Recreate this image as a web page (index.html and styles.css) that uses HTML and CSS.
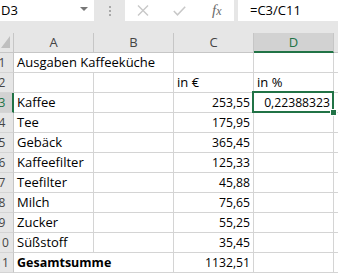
FILE: index.html
```html
<!DOCTYPE html>
<html lang="de">
<head>
  <meta charset="UTF-8">
  <title>Ausgaben Kaffeeküche</title>
  <link rel="stylesheet" href="styles.css">
</head>
<body>

<div class="toolbar">
  <div class="namebox">
    <span>D3</span>
    <span class="caret"></span>
  </div>
  <div class="grip"><i></i><i></i><i></i></div>
  <div class="fxbox">
    <svg class="ico-x" width="12" height="11" viewBox="0 0 12 11"><path d="M1 0.5L11 10.5M11 0.5L1 10.5" stroke="#c8c8c8" stroke-width="1.4" fill="none"/></svg>
    <svg class="ico-ok" width="13" height="10" viewBox="0 0 13 10"><path d="M0.8 5L4.5 8.8L12.2 0.8" stroke="#c8c8c8" stroke-width="1.5" fill="none"/></svg>
    <span class="fx"><i>f</i><i class="x">x</i></span>
  </div>
  <div class="formula">=C3/C11</div>
</div>

<div class="sheet">
  <div class="corner"><svg width="13" height="19" viewBox="0 0 13 19"><path d="M10 3L10 15L1 15Z" fill="#bfbfbf"/></svg></div>
  <div class="colhead">A</div>
  <div class="colhead">B</div>
  <div class="colhead">C</div>
  <div class="colhead active">D</div>
  <div class="colhead"></div>

  <div class="rowhead"><span>1</span></div>
  <div class="cell wide">Ausgaben Kaffeeküche</div>
  <div class="cell"></div>
  <div class="cell"></div>
  <div class="cell"></div>

  <div class="rowhead"><span>2</span></div>
  <div class="cell"></div>
  <div class="cell"></div>
  <div class="cell">in €</div>
  <div class="cell">in %</div>
  <div class="cell"></div>

  <div class="rowhead active"><span>3</span></div>
  <div class="cell">Kaffee</div>
  <div class="cell"></div>
  <div class="cell num">253,55</div>
  <div class="cell num selected">0,22388323</div>
  <div class="cell"></div>

  <div class="rowhead"><span>4</span></div>
  <div class="cell">Tee</div>
  <div class="cell"></div>
  <div class="cell num">175,95</div>
  <div class="cell"></div>
  <div class="cell"></div>

  <div class="rowhead"><span>5</span></div>
  <div class="cell">Gebäck</div>
  <div class="cell"></div>
  <div class="cell num">365,45</div>
  <div class="cell"></div>
  <div class="cell"></div>

  <div class="rowhead"><span>6</span></div>
  <div class="cell">Kaffeefilter</div>
  <div class="cell"></div>
  <div class="cell num">125,33</div>
  <div class="cell"></div>
  <div class="cell"></div>

  <div class="rowhead"><span>7</span></div>
  <div class="cell">Teefilter</div>
  <div class="cell"></div>
  <div class="cell num">45,88</div>
  <div class="cell"></div>
  <div class="cell"></div>

  <div class="rowhead"><span>8</span></div>
  <div class="cell">Milch</div>
  <div class="cell"></div>
  <div class="cell num">75,65</div>
  <div class="cell"></div>
  <div class="cell"></div>

  <div class="rowhead"><span>9</span></div>
  <div class="cell">Zucker</div>
  <div class="cell"></div>
  <div class="cell num">55,25</div>
  <div class="cell"></div>
  <div class="cell"></div>

  <div class="rowhead"><span>10</span></div>
  <div class="cell">Süßstoff</div>
  <div class="cell"></div>
  <div class="cell num">35,45</div>
  <div class="cell"></div>
  <div class="cell"></div>

  <div class="rowhead"><span>11</span></div>
  <div class="cell wide bold">Gesamtsumme</div>
  <div class="cell num">1132,51</div>
  <div class="cell"></div>
  <div class="cell"></div>
</div>

</body>
</html>
```

FILE: styles.css
```css
body { margin: 0; background: #e6e6e6; font-family: "Open Sans", "Liberation Sans", sans-serif; color: #000; overflow: hidden; }

/* formula bar */
.toolbar { display: flex; height: 21px; }
.namebox { width: 94px; background: #fff; display: flex; align-items: center; justify-content: space-between; padding: 0 6px 1px 1px; box-sizing: border-box; font-size: 13px; }
.caret { width: 0; height: 0; border-left: 4px solid transparent; border-right: 4px solid transparent; border-top: 4px solid #777; margin-bottom: 2px; }
.grip { width: 31px; display: flex; flex-direction: column; align-items: center; justify-content: center; gap: 2px; }
.grip i { width: 2px; height: 2px; background: #a8a8a8; }
.fxbox { width: 109px; background: #fff; display: flex; align-items: center; padding-left: 12px; box-sizing: border-box; }
.ico-x { margin-right: 24px; }
.ico-ok { margin-right: 26px; }
.fx { font-family: "Liberation Serif", serif; color: #6a6a6a; font-size: 15px; line-height: 1; }
.fx .x { font-size: 12px; }
.formula { flex: 1; margin-left: 4px; background: #fff; padding: 0 0 1px 12px; font-size: 13px; line-height: 20px; }

/* sheet grid */
.sheet { display: grid; grid-template-columns: 14px 80px 80px 80px 80px 1fr; grid-auto-rows: 20px; margin-top: 12px; background: #fff; font-size: 13px; }
.corner, .colhead, .rowhead { background: #e6e6e6; box-sizing: border-box; border-right: 1px solid #c6c6c6; border-bottom: 1px solid #c6c6c6; color: #444; }
.corner { line-height: 0; }
.colhead { text-align: center; line-height: 19px; font-size: 13px; }
.colhead.active { background: #d2d2d2; color: #217346; border-bottom: 2px solid #217346; line-height: 18px; }
.rowhead { overflow: hidden; border-bottom-color: #d4d4d4; font-size: 12px; line-height: 19px; }
.rowhead span { display: block; width: 30px; margin-left: -13px; text-align: center; }
.rowhead.active { background: #d2d2d2; color: #217346; border-right: 2px solid #217346; }

.cell { box-sizing: border-box; border-right: 1px solid #d4d4d4; border-bottom: 1px solid #d4d4d4; padding: 0 3px; white-space: nowrap; line-height: 19px; }
.cell.wide { grid-column: span 2; }
.cell.bold { font-weight: 700; font-size: 12.5px; }
.num { text-align: right; font-size: 12.2px; }
.selected { position: relative; }
.selected::after { content: ""; position: absolute; left: -2px; top: -2px; right: -1px; bottom: -1px; border: 2px solid #217346; }
.selected::before { content: ""; position: absolute; right: -4px; bottom: -4px; width: 5px; height: 5px; background: #217346; border: 1px solid #fff; z-index: 1; }
```
